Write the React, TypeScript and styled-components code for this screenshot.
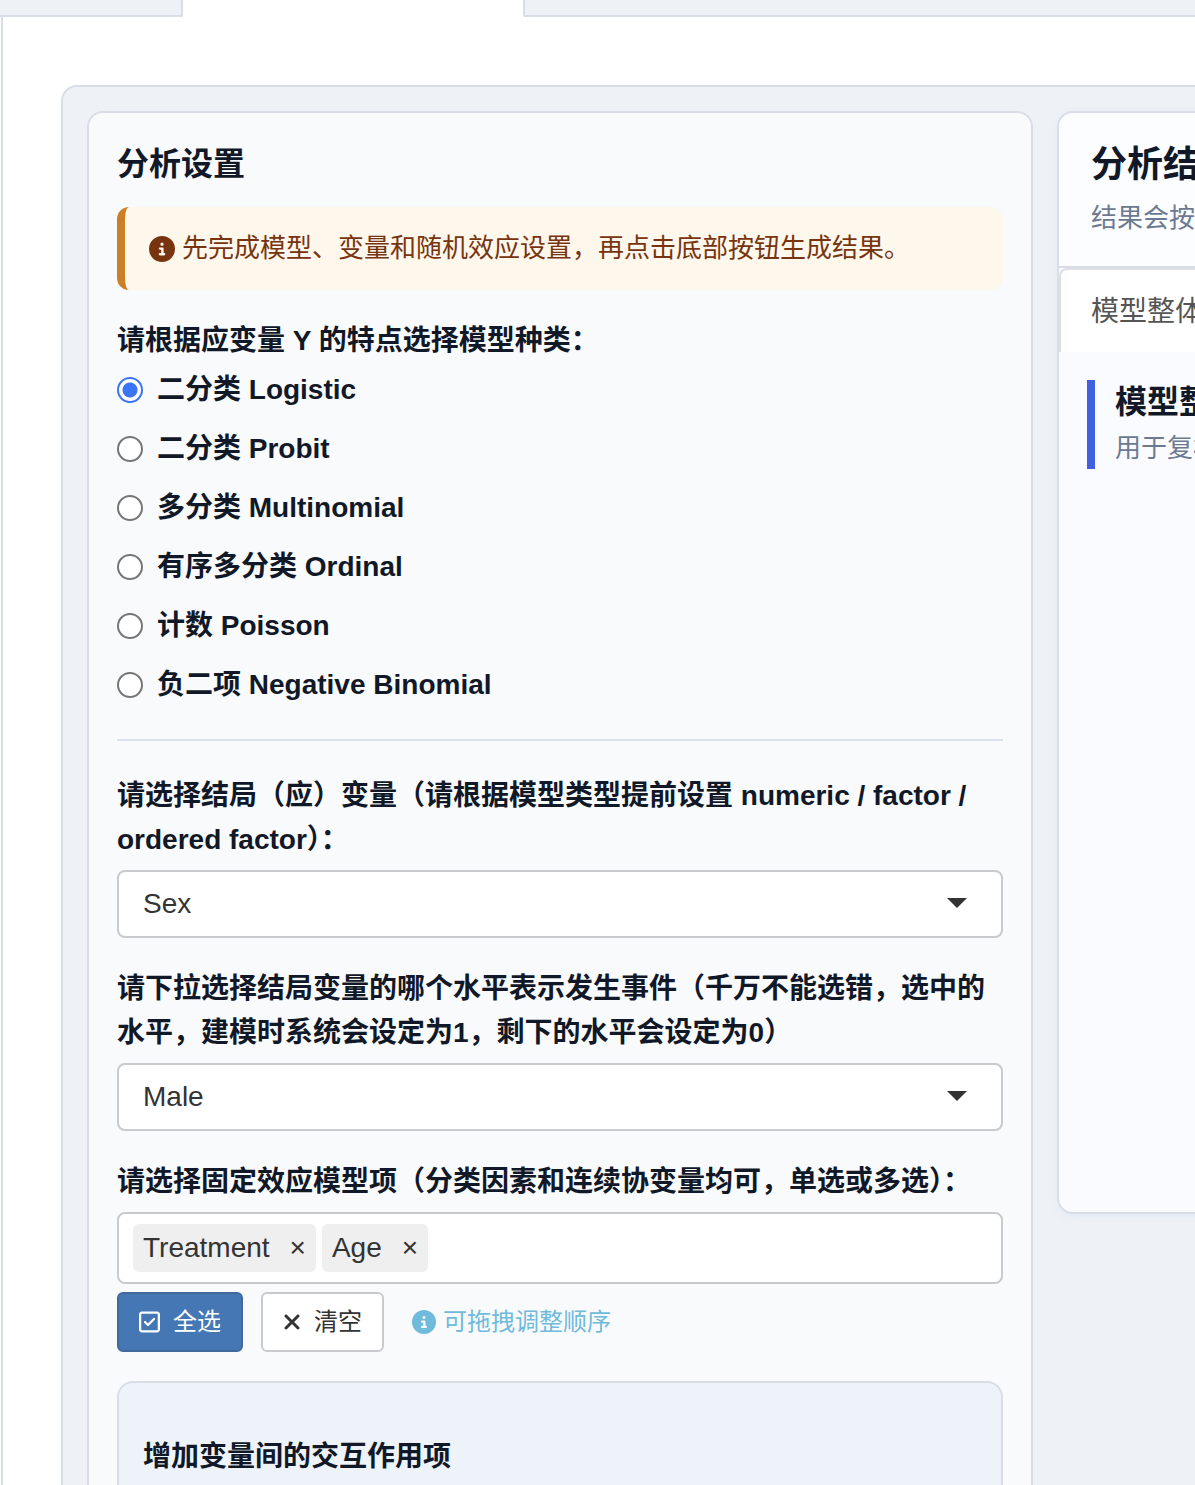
import React, { useState } from "react";
import styled, { createGlobalStyle, css } from "styled-components";
import { FaCircleInfo, FaRegSquareCheck, FaXmark } from "react-icons/fa6";

const color = {
  ink: "#111827",
  body: "#333333",
  muted: "#6b7a90",
  line: "#d9dde8",
  control: "#c8cacd",
  canvas: "#eef2f7",
  card: "#f9fafc",
};

const GlobalStyle = createGlobalStyle`
  *, *::before, *::after { box-sizing: border-box; }
  body {
    margin: 0;
    background: #ffffff;
    color: ${color.body};
    font-family: "Liberation Sans", "Noto Sans CJK SC", sans-serif;
    font-size: 28px;
    line-height: 44px;
  }
  button, input, select { font: inherit; color: inherit; }
`;

const Page = styled.div`
  display: flex;
  flex-direction: column;
  min-height: 100vh;
  overflow-x: clip;
`;

const TabStrip = styled.div`
  display: flex;
  height: 17px;
`;

const TabEdge = styled.div<{ $side?: "left" | "right" }>`
  width: 340px;
  ${(p) =>
    p.$side &&
    css`
      background: ${color.canvas};
      border-bottom: 2px solid ${color.line};
    `}
  ${(p) =>
    p.$side === "left" &&
    css`
      width: 183px;
      border-right: 2px solid ${color.line};
      border-bottom-right-radius: 2px;
    `}
  ${(p) =>
    p.$side === "right" &&
    css`
      flex: 1;
      border-left: 2px solid ${color.line};
      border-bottom-left-radius: 2px;
    `}
`;

const Main = styled.main`
  flex: 1;
  display: flex;
  margin-left: 1px;
  padding: 68px 0 0 58px;
  border-left: 2px solid ${color.line};
`;

const Shell = styled.div`
  flex: 1;
  display: grid;
  grid-template-columns: minmax(0, 1fr) 600px;
  gap: 24px;
  margin-right: -488px;
  padding: 24px 24px 0;
  background: ${color.canvas};
  border: 2px solid ${color.line};
  border-bottom: 0;
  border-radius: 16px 16px 0 0;
`;

const SettingsCard = styled.form`
  display: flex;
  flex-direction: column;
  padding: 28px 28px 0;
  background: ${color.card};
  border: 2px solid ${color.line};
  border-bottom: 0;
  border-radius: 16px 16px 0 0;
`;

const CardTitle = styled.h2`
  margin: 0 0 20px;
  color: ${color.ink};
  font-size: 32px;
  line-height: 46px;
  font-weight: 700;
`;

const Notice = styled.p`
  display: flex;
  align-items: center;
  gap: 7px;
  margin: 0 0 29px;
  padding: 20px 24px;
  background: #fef7eb;
  border-left: 8px solid #cc7f29;
  border-radius: 12px;
  color: #77340f;
  font-size: 26px;
  line-height: 43px;
`;

const Group = styled.fieldset`
  margin: 0;
  padding: 0;
  border: 0;
  min-width: 0;
`;

const labelText = css`
  color: ${color.ink};
  font-weight: 700;
`;

const Legend = styled.legend`
  ${labelText}
  padding: 0;
  margin-bottom: 5px;
`;

const Options = styled.div`
  display: flex;
  flex-direction: column;
  gap: 15px;
`;

const Option = styled.label`
  ${labelText}
  display: flex;
  align-items: center;
  gap: 14px;
`;

const Radio = styled.input`
  appearance: none;
  width: 26px;
  height: 26px;
  margin: 0;
  background: #ffffff;
  border: 2px solid #767676;
  border-radius: 50%;

  &:checked {
    border-color: #3b75f5;
    background: radial-gradient(circle, #3b75f5 7px, #ffffff 8px);
  }
`;

const Divider = styled.hr`
  width: 100%;
  margin: 32px 0 33px;
  border: 0;
  border-top: 2px solid #dbe4ee;
`;

const Field = styled.div`
  display: flex;
  flex-direction: column;
  gap: 8px;
  margin-bottom: 29px;
`;

const FieldLabel = styled.label`
  ${labelText}
`;

const SelectBox = styled.div`
  position: relative;
  display: grid;

  &::after {
    content: "";
    position: absolute;
    right: 36px;
    top: 28px;
    border: 10px solid transparent;
    border-top-color: ${color.body};
    border-bottom: 0;
    pointer-events: none;
  }
`;

const Select = styled.select`
  appearance: none;
  height: 68px;
  padding: 0 64px 0 24px;
  background: #ffffff;
  border: 2px solid ${color.control};
  border-radius: 8px;
`;

const TagBox = styled.div`
  display: flex;
  flex-wrap: wrap;
  gap: 6px;
  padding: 10px 14px;
  background: #ffffff;
  border: 2px solid ${color.control};
  border-radius: 8px;
`;

const Tag = styled.span`
  display: flex;
  gap: 20px;
  padding: 2px 10px;
  background: #efefef;
  border-radius: 6px;
`;

const TagRemove = styled.button`
  padding: 0;
  background: none;
  border: 0;
  cursor: pointer;
`;

const Toolbar = styled.div`
  display: flex;
  flex-wrap: wrap;
  align-items: center;
  gap: 18px;
  font-size: 24px;
`;

const ToolButton = styled.button<{ $primary?: boolean }>`
  display: flex;
  align-items: center;
  gap: 13px;
  height: 60px;
  padding: 0 20px;
  background: ${(p) => (p.$primary ? "#4577b5" : "#ffffff")};
  border: 2px solid ${(p) => (p.$primary ? "#41699c" : color.control)};
  border-radius: 6px;
  color: ${(p) => (p.$primary ? "#ffffff" : color.body)};
  cursor: pointer;
`;

const CheckIcon = styled(FaRegSquareCheck)`
  width: 21px;
  height: 24px;
`;

const ClearIcon = styled(FaXmark)`
  width: 18px;
  height: 24px;
`;

const Hint = styled.span`
  display: flex;
  align-items: center;
  gap: 7px;
  padding-left: 10px;
  color: #70bbdb;
`;

const InteractionPanel = styled.section`
  flex: 1;
  padding: 52px 24px 0;
  background: #eef3fa;
  border: 2px solid ${color.line};
  border-bottom: 0;
  border-radius: 16px 16px 0 0;
`;

const PanelTitle = styled.h3`
  ${labelText}
  margin: 0;
  font-size: 28px;
`;

const ResultCard = styled.section`
  align-self: start;
  min-height: 1103px;
  background: #fafbff;
  border: 2px solid ${color.line};
  border-radius: 16px;
  box-shadow: 0 2px 8px rgba(70, 90, 180, 0.06);
  overflow: hidden;
  white-space: nowrap;
`;

const ResultHeader = styled.header`
  display: grid;
  gap: 8px;
  padding: 28px 32px 27px;
  background: #fcfdff;
  border-bottom: 2px solid ${color.line};
`;

const ResultTitle = styled.h2`
  margin: 0;
  color: ${color.ink};
  font-size: 36px;
  line-height: 48px;
`;

const Caption = styled.p`
  margin: 0;
  color: ${color.muted};
  font-size: 26px;
  line-height: 42px;
`;

const ResultTab = styled.button`
  display: block;
  width: 100%;
  padding: 20px 30px 18px;
  background: #ffffff;
  border: 2px solid #dddfe4;
  border-bottom: 0;
  border-radius: 8px 8px 0 0;
  color: #555555;
  text-align: left;
`;

const ResultSection = styled.div`
  margin: 28px;
  padding-left: 20px;
  border-left: 8px solid #4060e0;
`;

const SectionTitle = styled.h3`
  margin: 0 0 3px;
  color: ${color.ink};
  font-size: 32px;
  line-height: 44px;
`;

const MODELS = [
  "二分类 Logistic",
  "二分类 Probit",
  "多分类 Multinomial",
  "有序多分类 Ordinal",
  "计数 Poisson",
  "负二项 Negative Binomial",
];

const TERMS = ["Treatment", "Age"];

export default function App() {
  const [model, setModel] = useState(MODELS[0]);
  const [terms, setTerms] = useState(TERMS);

  return (
    <>
      <GlobalStyle />
      <Page>
        <TabStrip>
          <TabEdge $side="left" />
          <TabEdge />
          <TabEdge $side="right" />
        </TabStrip>
        <Main>
          <Shell>
            <SettingsCard>
              <CardTitle>分析设置</CardTitle>
              <Notice>
                <FaCircleInfo size={26} />
                先完成模型、变量和随机效应设置，再点击底部按钮生成结果。
              </Notice>

              <Group>
                <Legend>请根据应变量 Y 的特点选择模型种类：</Legend>
                <Options>
                  {MODELS.map((name) => (
                    <Option key={name}>
                      <Radio
                        type="radio"
                        name="model"
                        checked={model === name}
                        onChange={() => setModel(name)}
                      />
                      {name}
                    </Option>
                  ))}
                </Options>
              </Group>

              <Divider />

              <Field>
                <FieldLabel htmlFor="outcome">
                  请选择结局（应）变量（请根据模型类型提前设置 numeric / factor / ordered factor）：
                </FieldLabel>
                <SelectBox>
                  <Select id="outcome" defaultValue="Sex">
                    <option>Sex</option>
                  </Select>
                </SelectBox>
              </Field>

              <Field>
                <FieldLabel htmlFor="level">
                  请下拉选择结局变量的哪个水平表示发生事件（千万不能选错，选中的水平，建模时系统会设定为1，剩下的水平会设定为0）
                </FieldLabel>
                <SelectBox>
                  <Select id="level" defaultValue="Male">
                    <option>Male</option>
                  </Select>
                </SelectBox>
              </Field>

              <Field>
                <FieldLabel as="span" id="terms-label">
                  请选择固定效应模型项（分类因素和连续协变量均可，单选或多选）：
                </FieldLabel>
                <TagBox role="group" aria-labelledby="terms-label">
                  {terms.map((term) => (
                    <Tag key={term}>
                      {term}
                      <TagRemove
                        type="button"
                        onClick={() => setTerms(terms.filter((t) => t !== term))}
                      >
                        ×
                      </TagRemove>
                    </Tag>
                  ))}
                </TagBox>
                <Toolbar>
                  <ToolButton type="button" $primary onClick={() => setTerms(TERMS)}>
                    <CheckIcon />
                    全选
                  </ToolButton>
                  <ToolButton type="button" onClick={() => setTerms([])}>
                    <ClearIcon />
                    清空
                  </ToolButton>
                  <Hint>
                    <FaCircleInfo size={24} />
                    可拖拽调整顺序
                  </Hint>
                </Toolbar>
              </Field>

              <InteractionPanel>
                <PanelTitle>增加变量间的交互作用项</PanelTitle>
              </InteractionPanel>
            </SettingsCard>

            <ResultCard>
              <ResultHeader>
                <ResultTitle>分析结果</ResultTitle>
                <Caption>结果会按</Caption>
              </ResultHeader>
              <ResultTab type="button">模型整体</ResultTab>
              <ResultSection>
                <SectionTitle>模型整体</SectionTitle>
                <Caption>用于复核</Caption>
              </ResultSection>
            </ResultCard>
          </Shell>
        </Main>
      </Page>
    </>
  );
}
